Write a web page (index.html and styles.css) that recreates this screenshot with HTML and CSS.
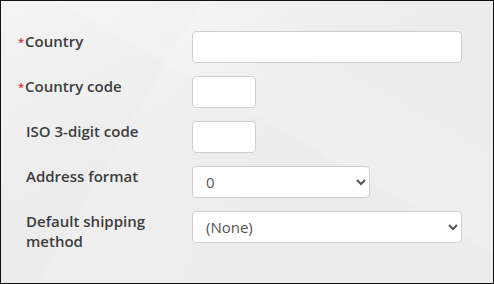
FILE: index.html
```
<!DOCTYPE html>
<html lang="en">
<head>
  <meta charset="UTF-8" />
  <meta name="viewport" content="width=device-width, initial-scale=1.0"/>
  <title>Country</title>
  <link rel="stylesheet" href="styles.css">
</head>
<body>
<div class="panel">
  <div class="row">
    <label class="label" for="country"><span class="req">*</span>Country</label>
    <input class="field wide" id="country" type="text" />
  </div>
  <div class="row">
    <label class="label" for="code"><span class="req">*</span>Country code</label>
    <input class="field short" id="code" type="text" />
  </div>
  <div class="row">
    <label class="label" for="iso">ISO 3-digit code</label>
    <input class="field short" id="iso" type="text" />
  </div>
  <div class="row">
    <label class="label" for="format">Address format</label>
    <select class="field medium" id="format">
      <option>0</option>
    </select>
  </div>
  <div class="row">
    <label class="label" for="shipping">Default shipping method</label>
    <select class="field wide" id="shipping">
      <option>(None)</option>
    </select>
  </div>
</div>
</body>
</html>
```
FILE: styles.css
```
body { margin: 0; font-family: "Open Sans", Arial, sans-serif; }

.panel {
  box-sizing: border-box;
  width: 494px;
  height: 284px;
  border: 1px solid #111;
  padding: 30px 0 0 25px;
  display: flex;
  flex-direction: column;
  gap: 13px;
  background:
    linear-gradient(155deg, rgba(255,255,255,0.4) 0%, rgba(255,255,255,0) 45%),
    linear-gradient(30deg, rgba(255,255,255,0) 55%, rgba(255,255,255,0.15) 56%, rgba(255,255,255,0) 80%),
    linear-gradient(120deg, rgba(0,0,0,0) 30%, rgba(255,255,255,0.15) 31%, rgba(0,0,0,0) 60%),
    #ececec;
}

.row {
  display: flex;
  align-items: flex-start;
}

.label {
  width: 151px;
  margin-right: 15px;
  font-size: 15px;
  line-height: 20px;
  font-weight: 600;
  color: #3d3d3d;
}

.req {
  color: #e0262a;
  font-size: 11px;
  margin-left: -8px;
  margin-right: 1px;
  vertical-align: 1px;
}

.field {
  box-sizing: border-box;
  height: 32px;
  border: 1px solid #cfcfcf;
  border-radius: 4px;
  background: #fff;
  font-family: "Open Sans", Arial, sans-serif;
  font-size: 15px;
  color: #555;
  padding: 0 12px 0 9px;
  outline: none;
}

.wide { width: 270px; }
.short { width: 64px; }
.medium { width: 178px; }
```
